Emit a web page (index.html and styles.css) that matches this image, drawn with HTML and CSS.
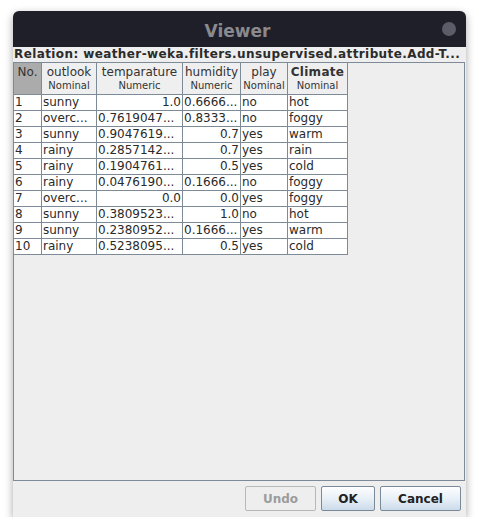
FILE: index.html
```html
<!DOCTYPE html>
<html>
<head>
<meta charset="utf-8">
<link rel="stylesheet" href="styles.css">
</head>
<body>
<div class="window">
  <div class="titlebar">
    <span class="title">Viewer</span>
    <span class="dot"></span>
  </div>
  <div class="relation">Relation: weather-weka.filters.unsupervised.attribute.Add-T...</div>
  <div class="pane">
    <div class="grid">
      <div class="hd no"><div class="h1">No.</div></div>
      <div class="hd"><div class="h1">outlook</div><div class="h2">Nominal</div></div>
      <div class="hd"><div class="h1">temparature</div><div class="h2">Numeric</div></div>
      <div class="hd"><div class="h1">humidity</div><div class="h2">Numeric</div></div>
      <div class="hd"><div class="h1">play</div><div class="h2">Nominal</div></div>
      <div class="hd"><div class="h1 b">Climate</div><div class="h2">Nominal</div></div>

      <div class="c">1</div><div class="c">sunny</div><div class="c r">1.0</div><div class="c">0.6666...</div><div class="c">no</div><div class="c">hot</div>
      <div class="c">2</div><div class="c">overc...</div><div class="c">0.7619047...</div><div class="c">0.8333...</div><div class="c">no</div><div class="c">foggy</div>
      <div class="c">3</div><div class="c">sunny</div><div class="c">0.9047619...</div><div class="c r">0.7</div><div class="c">yes</div><div class="c">warm</div>
      <div class="c">4</div><div class="c">rainy</div><div class="c">0.2857142...</div><div class="c r">0.7</div><div class="c">yes</div><div class="c">rain</div>
      <div class="c">5</div><div class="c">rainy</div><div class="c">0.1904761...</div><div class="c r">0.5</div><div class="c">yes</div><div class="c">cold</div>
      <div class="c">6</div><div class="c">rainy</div><div class="c">0.0476190...</div><div class="c">0.1666...</div><div class="c">no</div><div class="c">foggy</div>
      <div class="c">7</div><div class="c">overc...</div><div class="c r">0.0</div><div class="c r">0.0</div><div class="c">yes</div><div class="c">foggy</div>
      <div class="c">8</div><div class="c">sunny</div><div class="c">0.3809523...</div><div class="c r">1.0</div><div class="c">no</div><div class="c">hot</div>
      <div class="c">9</div><div class="c">sunny</div><div class="c">0.2380952...</div><div class="c">0.1666...</div><div class="c">yes</div><div class="c">warm</div>
      <div class="c">10</div><div class="c">rainy</div><div class="c">0.5238095...</div><div class="c r">0.5</div><div class="c">yes</div><div class="c">cold</div>
    </div>
  </div>
  <div class="buttons">
    <button class="btn undo" disabled>Undo</button>
    <button class="btn ok">OK</button>
    <button class="btn cancel">Cancel</button>
  </div>
</div>
</body>
</html>
```
FILE: styles.css
```css
html, body {
  margin: 0;
  padding: 0;
  background: #ffffff;
}
body {
  font-family: "DejaVu Sans", sans-serif;
}
.window {
  margin: 11px 0 0 13px;
  width: 453px;
  height: 506px;
  background: #eeeeee;
  border-radius: 6px 6px 0 0;
  box-shadow: 0 3px 9px rgba(0, 0, 0, 0.35);
  display: flex;
  flex-direction: column;
}
.titlebar {
  height: 36px;
  background: #1f1f29;
  border-radius: 6px 6px 0 0;
  display: flex;
  align-items: center;
  justify-content: center;
  position: relative;
}
.title {
  color: #8a8a8e;
  font-weight: bold;
  font-size: 17px;
  margin: 3px 0 0 -4px;
}
.dot {
  position: absolute;
  right: 10px;
  top: 11px;
  width: 14px;
  height: 14px;
  border-radius: 50%;
  background: #5c5c68;
}
.relation {
  height: 15px;
  line-height: 15px;
  font-size: 12px;
  font-weight: bold;
  letter-spacing: 0.4px;
  color: #2b2b2b;
  padding-left: 1px;
  white-space: nowrap;
  overflow: hidden;
}
.pane {
  width: 450px;
  height: 417px;
  border: 1px solid #7d8b99;
}
.grid {
  display: grid;
  grid-template-columns: 28px 55px 86px 58px 47px 60px;
  grid-template-rows: 32px repeat(10, 16px);
  width: 334px;
}
.hd {
  border-right: 1px solid #7d8b99;
  border-bottom: 1px solid #7d8b99;
  background: #efefef;
  text-align: center;
  padding-top: 2px;
  color: #333333;
}
.hd.no {
  background: #ababab;
}
.h1 {
  font-size: 12px;
  line-height: 15px;
  white-space: nowrap;
}
.h1.b {
  font-weight: bold;
  letter-spacing: 0.3px;
}
.h2 {
  font-size: 10px;
  line-height: 12px;
  white-space: nowrap;
}
.c {
  background: #ffffff;
  border-right: 1px solid #7d8b99;
  border-bottom: 1px solid #7d8b99;
  font-size: 12px;
  line-height: 15px;
  padding: 0 1px;
  color: #2a2a2a;
  white-space: nowrap;
  overflow: hidden;
}
.c.r {
  text-align: right;
}
.buttons {
  display: flex;
  justify-content: flex-end;
  gap: 5px;
  padding: 5px 5px 0 0;
}
.btn {
  height: 25px;
  margin: 0;
  padding: 0;
  border: 1px solid #7a8a99;
  border-radius: 2px;
  background: linear-gradient(#fdfeff, #e6eef6 55%, #ccdbea);
  font-family: "DejaVu Sans", sans-serif;
  font-weight: bold;
  font-size: 12px;
  color: #222222;
}
.undo {
  width: 71px;
  background: #eeeeee;
  border-color: #b8b8b8;
  color: #9c9c9c;
}
.ok {
  width: 54px;
}
.cancel {
  width: 81px;
}
```
